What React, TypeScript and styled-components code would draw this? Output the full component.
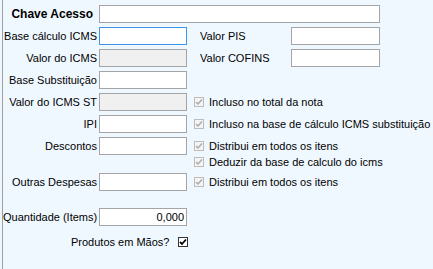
import React from "react";
import styled, { createGlobalStyle } from "styled-components";

const GlobalStyle = createGlobalStyle`
  html, body {
    margin: 0;
    padding: 0;
    background: #f0f8ff;
  }
  body {
    font-family: "Liberation Sans", Arial, sans-serif;
    font-size: 11px;
    color: #000;
  }
`;

const Panel = styled.div`
  margin-left: 2px;
  border-left: 1px solid #a0a0a0;
  height: 269px;
  box-sizing: border-box;
  padding-top: 5px;
  display: flex;
  flex-direction: column;
  gap: 4px;
`;

const Row = styled.div<{ $top?: number }>`
  display: flex;
  align-items: flex-start;
  margin-top: ${(p) => p.$top ?? 0}px;
`;

const Label = styled.div<{ $bold?: boolean }>`
  width: ${(p) => (p.$bold ? 90 : 94)}px;
  padding-right: ${(p) => (p.$bold ? 4 : 0)}px;
  height: 18px;
  line-height: 18px;
  text-align: right;
  white-space: nowrap;
  font-weight: ${(p) => (p.$bold ? "bold" : "normal")};
  font-size: ${(p) => (p.$bold ? 12 : 11)}px;
`;

const Input = styled.div<{ $w?: number; $focus?: boolean; $disabled?: boolean }>`
  box-sizing: border-box;
  width: ${(p) => p.$w ?? 88}px;
  height: 18px;
  margin-left: 2px;
  border: 1px solid ${(p) => (p.$focus ? "#3c96f0" : "#a5a5a5")};
  background: ${(p) => (p.$disabled ? "#f0f0f0" : "#fff")};
  text-align: right;
  line-height: 16px;
  padding-right: 2px;
`;

const SideLabel = styled.div`
  margin-left: 13px;
  width: 91px;
  height: 18px;
  line-height: 18px;
  white-space: nowrap;
`;

const SideInput = styled(Input)`
  margin-left: 0;
  width: 89px;
`;

const CheckStack = styled.div`
  display: flex;
  flex-direction: column;
  margin-left: 7px;
  padding-top: 1px;
`;

const CheckLine = styled.div<{ $h?: number }>`
  display: flex;
  align-items: center;
  height: ${(p) => p.$h ?? 16}px;
  white-space: nowrap;
`;

const Box = styled.span<{ $on?: boolean }>`
  box-sizing: border-box;
  width: 10px;
  height: 10px;
  border: 1px solid ${(p) => (p.$on ? "#333" : "#bcbcbc")};
  background: ${(p) => (p.$on ? "#fff" : "#f4f4f4")};
  display: inline-flex;
  align-items: center;
  justify-content: center;
  margin-right: 5px;
  flex-shrink: 0;
`;

const Check = ({ on }: { on?: boolean }) => (
  <Box $on={on}>
    <svg width="8" height="8" viewBox="0 0 8 8">
      <path
        d="M1 4 L3 6 L7 1.5"
        fill="none"
        stroke={on ? "#000" : "#a8a8a8"}
        strokeWidth={on ? 1.8 : 1.3}
      />
    </svg>
  </Box>
);

const Produtos = styled.div`
  display: flex;
  align-items: center;
  height: 18px;
  padding-left: 68px;
`;

const ProdutosText = styled.span`
  margin-right: 9px;
`;

export default function App() {
  return (
    <>
      <GlobalStyle />
      <Panel>
        <Row>
          <Label $bold>Chave Acesso</Label>
          <Input $w={281} />
        </Row>
        <Row>
          <Label>Base cálculo ICMS</Label>
          <Input $focus />
          <SideLabel>Valor PIS</SideLabel>
          <SideInput />
        </Row>
        <Row>
          <Label>Valor do ICMS</Label>
          <Input $disabled />
          <SideLabel>Valor COFINS</SideLabel>
          <SideInput />
        </Row>
        <Row>
          <Label>Base Substituição</Label>
          <Input />
        </Row>
        <Row>
          <Label>Valor do ICMS ST</Label>
          <Input $disabled />
          <CheckStack>
            <CheckLine>
              <Check />
              Incluso no total da nota
            </CheckLine>
          </CheckStack>
        </Row>
        <Row>
          <Label>IPI</Label>
          <Input />
          <CheckStack>
            <CheckLine>
              <Check />
              Incluso na base de cálculo ICMS substituição
            </CheckLine>
          </CheckStack>
        </Row>
        <Row>
          <Label>Descontos</Label>
          <Input />
          <CheckStack>
            <CheckLine>
              <Check />
              Distribui em todos os itens
            </CheckLine>
            <CheckLine $h={15}>
              <Check />
              Deduzir da base de calculo do icms
            </CheckLine>
          </CheckStack>
        </Row>
        <Row>
          <Label>Outras Despesas</Label>
          <Input />
          <CheckStack>
            <CheckLine>
              <Check />
              Distribui em todos os itens
            </CheckLine>
          </CheckStack>
        </Row>
        <Row $top={13}>
          <Label>Quantidade (Items)</Label>
          <Input>0,000</Input>
        </Row>
        <Row $top={3}>
          <Produtos>
            <ProdutosText>Produtos em Mãos?</ProdutosText>
            <Check on />
          </Produtos>
        </Row>
      </Panel>
    </>
  );
}
